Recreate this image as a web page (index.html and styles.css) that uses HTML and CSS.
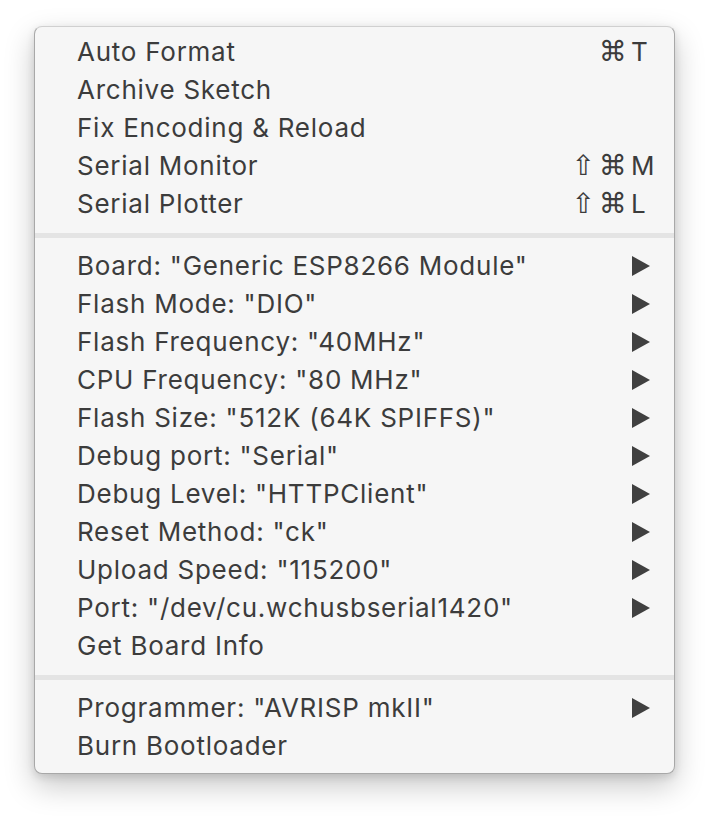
FILE: index.html
```html
<!DOCTYPE html>
<html>
<head>
<meta charset="utf-8">
<link rel="stylesheet" href="styles.css">
</head>
<body>
<div class="menu">
  <div class="group">
    <div class="item"><span class="label">Auto Format</span><span class="keys"><span class="mods">⌘</span><span class="key">T</span></span></div>
    <div class="item"><span class="label">Archive Sketch</span></div>
    <div class="item"><span class="label">Fix Encoding &amp; Reload</span></div>
    <div class="item"><span class="label">Serial Monitor</span><span class="keys"><span class="mods">⇧⌘</span><span class="key">M</span></span></div>
    <div class="item"><span class="label">Serial Plotter</span><span class="keys"><span class="mods">⇧⌘</span><span class="key">L</span></span></div>
  </div>
  <div class="sep"></div>
  <div class="group">
    <div class="item"><span class="label">Board: "Generic ESP8266 Module"</span><span class="arrow"></span></div>
    <div class="item"><span class="label">Flash Mode: "DIO"</span><span class="arrow"></span></div>
    <div class="item"><span class="label">Flash Frequency: "40MHz"</span><span class="arrow"></span></div>
    <div class="item"><span class="label">CPU Frequency: "80 MHz"</span><span class="arrow"></span></div>
    <div class="item"><span class="label">Flash Size: "512K (64K SPIFFS)"</span><span class="arrow"></span></div>
    <div class="item"><span class="label">Debug port: "Serial"</span><span class="arrow"></span></div>
    <div class="item"><span class="label">Debug Level: "HTTPClient"</span><span class="arrow"></span></div>
    <div class="item"><span class="label">Reset Method: "ck"</span><span class="arrow"></span></div>
    <div class="item"><span class="label">Upload Speed: "115200"</span><span class="arrow"></span></div>
    <div class="item"><span class="label">Port: "/dev/cu.wchusbserial1420"</span><span class="arrow"></span></div>
    <div class="item"><span class="label">Get Board Info</span></div>
  </div>
  <div class="sep"></div>
  <div class="group">
    <div class="item"><span class="label">Programmer: "AVRISP mkII"</span><span class="arrow"></span></div>
    <div class="item"><span class="label">Burn Bootloader</span></div>
  </div>
</div>
</body>
</html>
```
FILE: styles.css
```css
html, body {
  margin: 0;
  padding: 0;
  background: #ffffff;
}
body {
  padding: 26px 0 0 34px;
  min-height: 790px;
}
.menu {
  box-sizing: border-box;
  width: 641px;
  background: #f6f6f6;
  border: 1px solid #a8a8a8;
  border-top-color: #d0d0d0;
  border-radius: 8px;
  padding: 6px 0 8px;
  box-shadow: 0 12px 30px rgba(0, 0, 0, 0.22), 0 3px 8px rgba(0, 0, 0, 0.12);
  font-family: Inter, "Noto Sans", sans-serif;
  font-size: 26px;
  letter-spacing: 0.75px;
  color: #3c3c3c;
}
.item {
  display: flex;
  align-items: center;
  height: 38px;
  line-height: 38px;
  padding-left: 42px;
  padding-right: 24px;
  white-space: nowrap;
}
.label {
  flex: 1;
}
.keys {
  display: flex;
  align-items: center;
}
.mods {
  font-family: "DejaVu Sans", sans-serif;
  font-size: 28px;
  text-align: right;
  letter-spacing: 4px;
}
.key {
  width: 19px;
  letter-spacing: 0;
}
.arrow {
  width: 0;
  height: 0;
  border-top: 10px solid transparent;
  border-bottom: 10px solid transparent;
  border-left: 18px solid #404040;
}
.sep {
  height: 5px;
  margin: 10px 0 9px;
  background: #e4e4e4;
}
```
